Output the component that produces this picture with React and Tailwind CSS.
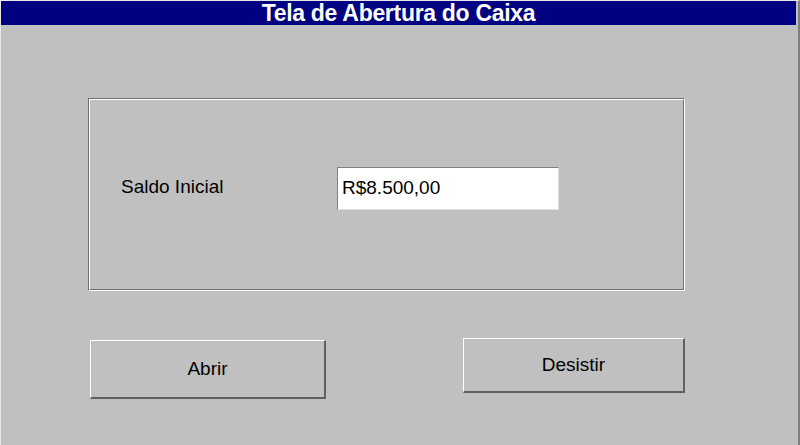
export default function App() {
  return (
    <div
      className="w-[800px] h-[445px] bg-[#c0c0c0] border-l border-t border-r-2 border-l-[#e8e8e8] border-t-[#e8e8e8] border-r-[#808080] flex flex-col"
      style={{ fontFamily: '"Liberation Sans", Arial, sans-serif' }}
    >
      {/* title bar */}
      <div className="h-[24px] mr-[2px] bg-[#000080] flex items-center justify-center">
        <span className="text-white font-bold text-[23px] leading-none tracking-[-0.3px]">Tela de Abertura do Caixa</span>
      </div>

      {/* etched group box */}
      <div className="ml-[87px] mt-[73px] w-[597px] h-[193px] border border-t-[#707070] border-l-[#707070] border-b-white border-r-white">
        <div className="h-full border border-t-white border-l-white border-b-[#707070] border-r-[#707070] flex items-start pt-[67px]">
          <span className="ml-[31px] mt-[8px] w-[216px] text-[19px] leading-[24px] text-black">Saldo Inicial</span>
          <div className="w-[222px] h-[43px] bg-white border border-t-[#808080] border-l-[#808080] border-b-[#e0e0e0] border-r-[#e0e0e0] flex items-center pl-[4px] text-[19px] text-black">
            R$8.500,00
          </div>
        </div>
      </div>

      {/* buttons */}
      <div className="flex items-start mt-[47px] ml-[89px]">
        <button className="mt-[2px] w-[236px] h-[59px] bg-[#c0c0c0] border border-t-white border-l-white border-b-2 border-r-2 border-b-[#606060] border-r-[#606060] text-[19px] text-black">
          Abrir
        </button>
        <button className="ml-[137px] w-[222px] h-[55px] bg-[#c0c0c0] border border-t-white border-l-white border-b-2 border-r-2 border-b-[#606060] border-r-[#606060] text-[19px] text-black">
          Desistir
        </button>
      </div>
    </div>
  );
}
